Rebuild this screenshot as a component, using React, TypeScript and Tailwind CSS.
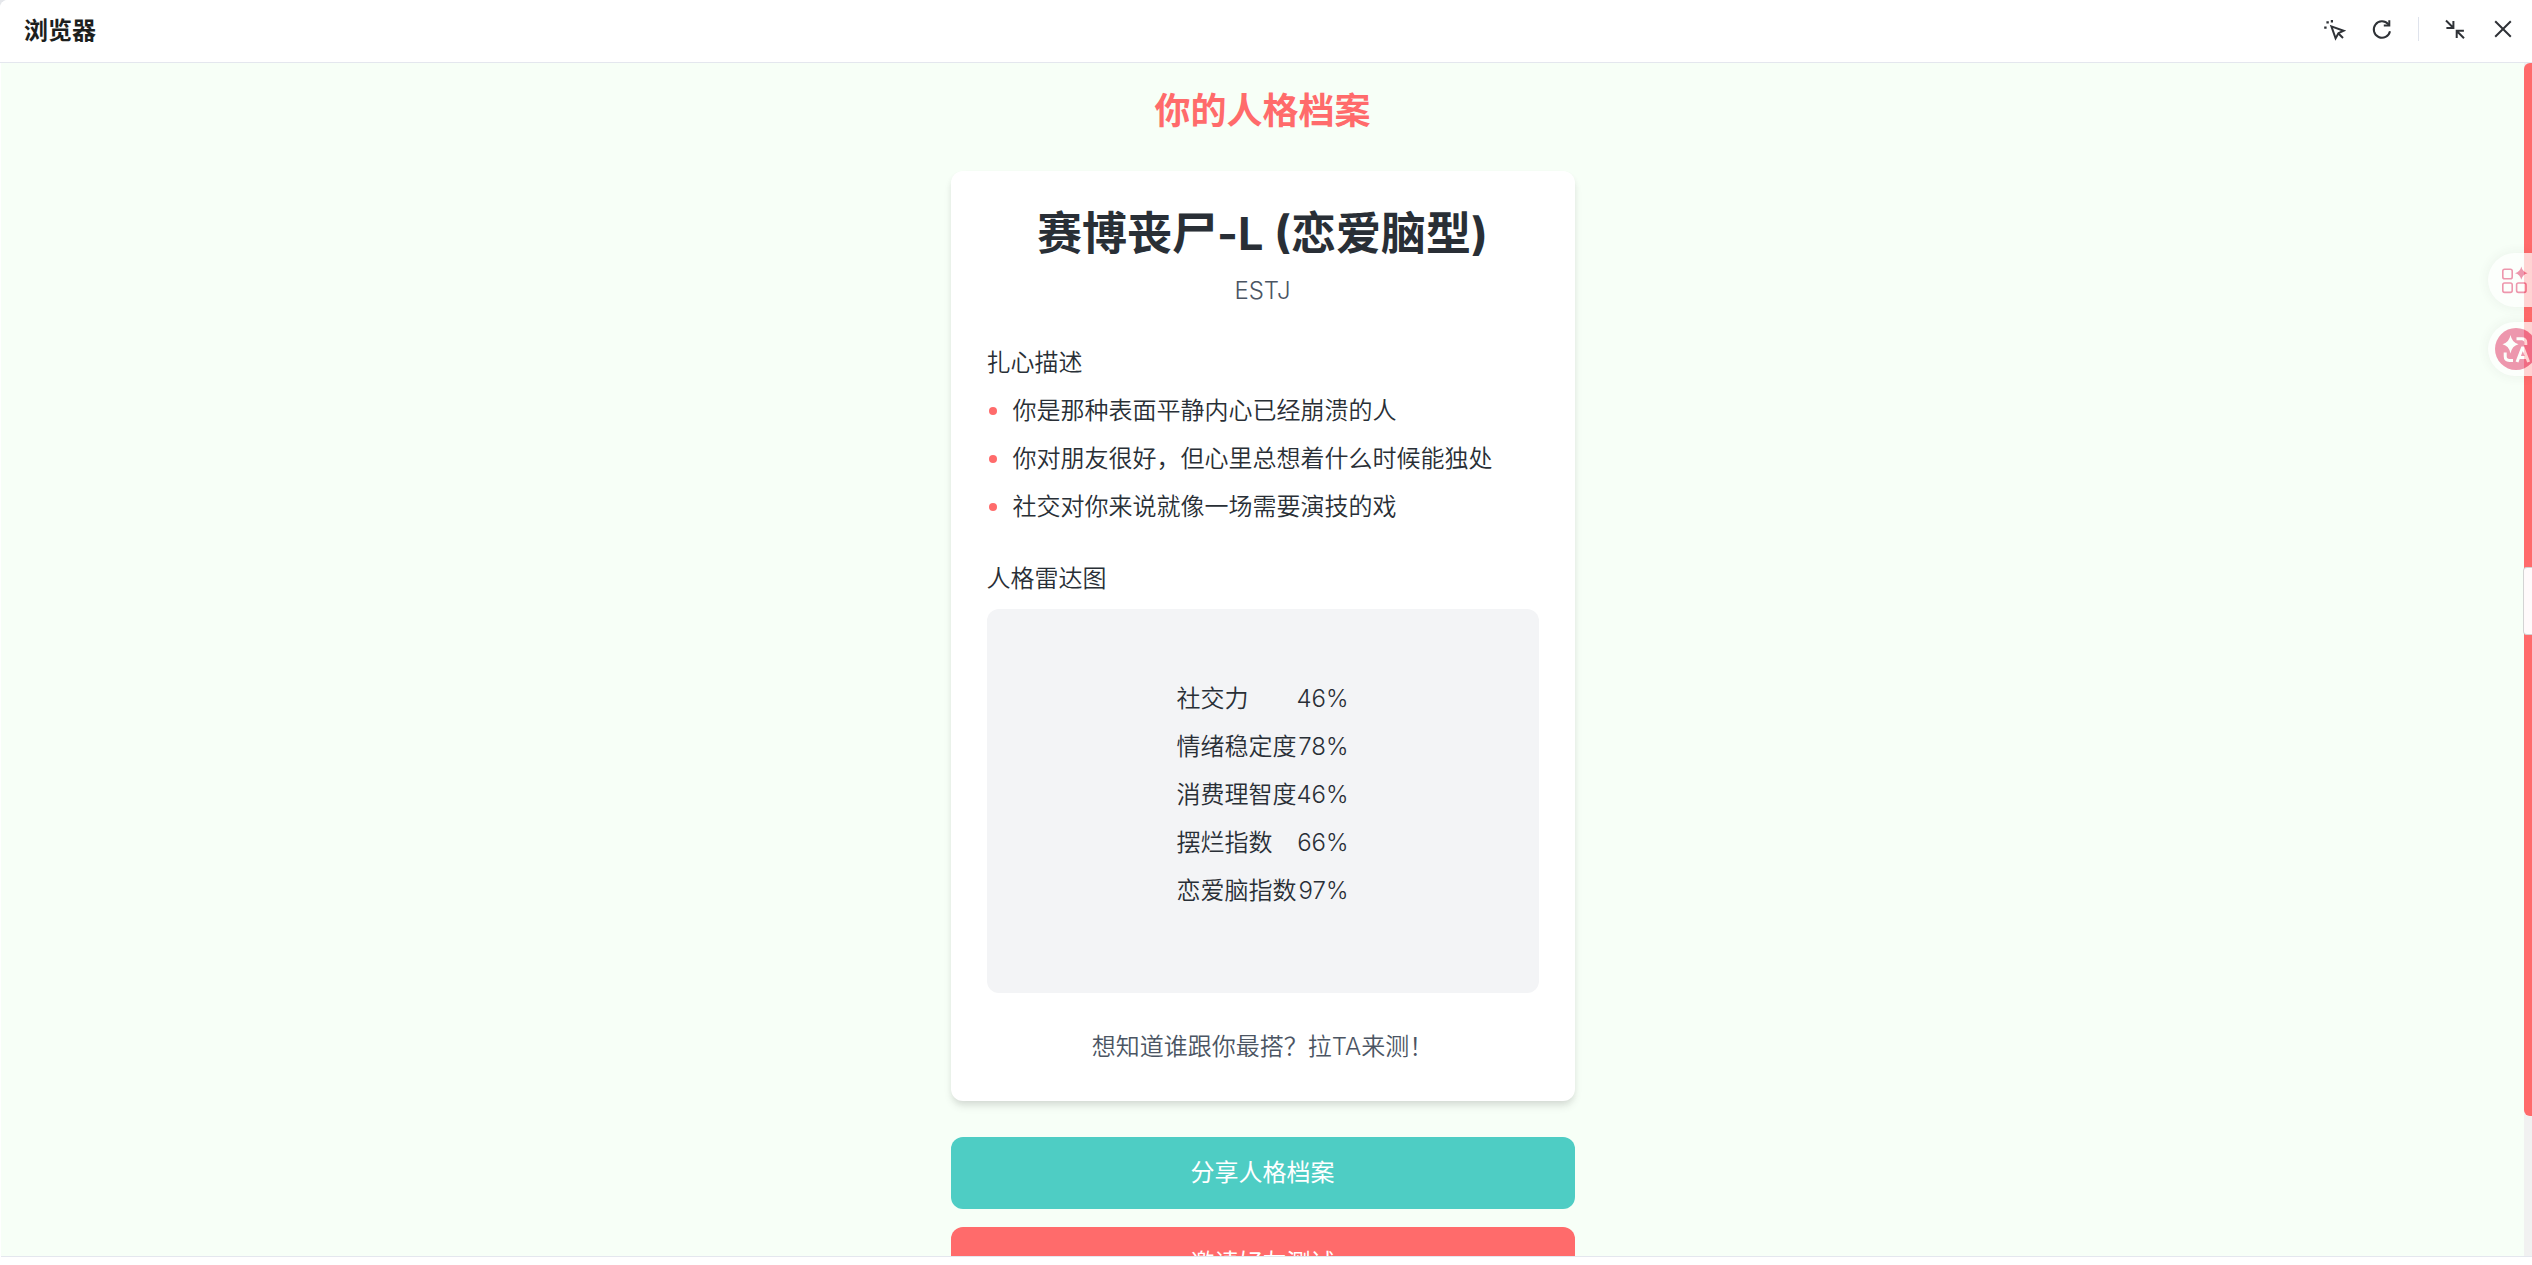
import type { ReactNode } from "react";

const descriptions = [
  "你是那种表面平静内心已经崩溃的人",
  "你对朋友很好，但心里总想着什么时候能独处",
  "社交对你来说就像一场需要演技的戏",
];

const stats = [
  { label: "社交力", value: 46 },
  { label: "情绪稳定度", value: 78 },
  { label: "消费理智度", value: 46 },
  { label: "摆烂指数", value: 66 },
  { label: "恋爱脑指数", value: 97 },
];

function IconButton({ label, children }: { label: string; children: ReactNode }) {
  return (
    <button type="button" aria-label={label} className="flex h-6 w-6 items-center justify-center text-[#2f3237]">
      {children}
    </button>
  );
}

function Toolbar() {
  return (
    <header className="flex h-[63px] shrink-0 items-center justify-between border-b border-[#e4e7ee] bg-white pl-6 pr-[17px]">
      <h1 className="text-2xl font-bold text-[#1d1f1e]">浏览器</h1>
      <div className="flex items-center gap-6 pb-1">
        <IconButton label="选择元素">
          <svg width="24" height="24" viewBox="0 0 24 24" fill="none" stroke="currentColor" strokeWidth="2">
            <path d="M9.4 9.4 21.6 13.7 16.4 16.2 13.6 21.4Z" />
            <path d="m16.2 16.2 4.8 4.8" />
            <path d="M2.2 10.6h2.4M4.4 5.4h2.4M9.9 3v2.4" strokeWidth="2.2" />
          </svg>
        </IconButton>
        <IconButton label="刷新">
          <svg width="24" height="24" viewBox="0 0 24 24" fill="none" stroke="currentColor" strokeWidth="2">
            <path d="M20 14.3A8.2 8.2 0 1 1 18.2 7.2L19.2 8.4" />
            <path d="M19.3 3.2v5.4h-5.5" />
          </svg>
        </IconButton>
        <span className="h-6 w-px bg-[#dfe3ec]" />
        <IconButton label="缩小">
          <svg width="24" height="24" viewBox="0 0 24 24" fill="none" stroke="currentColor" strokeWidth="2">
            <path d="m3 3.5 7 7M10.4 4v7H3.4" />
            <path d="m21 21.2-7-7M13.7 21v-7.2h7.2" />
          </svg>
        </IconButton>
        <IconButton label="关闭">
          <svg width="24" height="24" viewBox="0 0 24 24" fill="none" stroke="currentColor" strokeWidth="2">
            <path d="m4.2 4.2 15.6 15.6M19.8 4.2 4.2 19.8" />
          </svg>
        </IconButton>
      </div>
    </header>
  );
}

function ProfileCard() {
  return (
    <section className="mb-9 rounded-xl bg-white p-9 shadow-[0_6px_9px_-1px_rgba(0,0,0,0.1),0_3px_6px_-1px_rgba(0,0,0,0.06)]">
      <div className="mb-9 text-center">
        <h3 className="mb-3 text-[45px] leading-[54px] font-bold">赛博丧尸-L (恋爱脑型)</h3>
        <p className="font-light text-[#4b5563]">ESTJ</p>
      </div>

      <div className="mb-9">
        <h4 className="mb-3 font-[350]">扎心描述</h4>
        <ul className="flex flex-col gap-3">
          {descriptions.map((text) => (
            <li key={text} className="flex items-center">
              <span className="mr-4 ml-0.5 h-2 w-2 shrink-0 rounded-full bg-[#ff6b6b]" />
              {text}
            </li>
          ))}
        </ul>
      </div>

      <div className="mb-9">
        <h4 className="mb-3 font-[350]">人格雷达图</h4>
        <div className="flex h-96 items-center justify-center rounded-xl bg-[#f3f4f6]">
          <dl>
            {stats.map(({ label, value }) => (
              <div key={label} className="mb-3 flex justify-between">
                <dt>{label}</dt>
                <dd className="font-light">{value}%</dd>
              </div>
            ))}
          </dl>
        </div>
      </div>

      <p className="text-center text-[#4b5563]">想知道谁跟你最搭？拉TA来测！</p>
    </section>
  );
}

// Assistant buttons docked to the right edge of the window
function FloatingTools() {
  return (
    <div className="absolute top-[253px] right-0 flex flex-col gap-[15px] opacity-70">
      <button
        type="button"
        aria-label="工具箱"
        className="flex h-[54px] w-11 items-center rounded-l-full bg-white pl-3 shadow-[0_0_12px_rgba(0,0,0,0.08)]"
      >
        <svg width="28" height="28" viewBox="0 0 28 28" className="shrink-0" fill="none" stroke="#ea6c8e" strokeWidth="1.6">
          <rect x="2.8" y="3.3" width="9.4" height="9.4" rx="1.8" />
          <rect x="2.8" y="17" width="9.4" height="9.4" rx="1.8" />
          <rect x="16.6" y="17" width="9.4" height="9.4" rx="1.8" />
          <path d="M21.3.6Q22.4 6 27.6 7.2 22.4 8.4 21.3 13.8 20.2 8.4 15 7.2 20.2 6 21.3.6Z" fill="#ea6c8e" stroke="none" />
        </svg>
      </button>
      <button
        type="button"
        aria-label="翻译"
        className="flex h-[54px] w-11 items-center overflow-hidden rounded-l-full bg-white pl-[7px] shadow-[0_0_12px_rgba(0,0,0,0.08)]"
      >
        <svg width="42" height="42" viewBox="0 0 42 42" className="shrink-0" fill="none" stroke="#fff">
          <circle cx="21" cy="21" r="21" fill="#ea6c8e" stroke="none" />
          <path d="M15.5 7Q17 14.7 23.5 16.2 17 17.7 15.5 25.4 14 17.7 7.5 16.2 14 14.7 15.5 7Z" fill="#fff" stroke="none" />
          <path d="M21.5 10.8h5.3q4 0 4 4v2.2" strokeWidth="3" />
          <path d="M10.2 24.5v3.8q0 4.2 4.2 4.2h3.6" strokeWidth="3" />
          <path d="M22 34l5.4-14h.8l5.4 14M23.8 29.5h8" strokeWidth="3" />
        </svg>
      </button>
    </div>
  );
}

export default function App() {
  return (
    <div className="bg-[#e5e7eb] font-[Inter,'Noto_Sans_CJK_SC',sans-serif]">
      <div className="relative flex h-screen flex-col overflow-hidden rounded-tl-lg bg-white pb-2 text-2xl leading-9 font-[350] text-[#292f36]">
        <Toolbar />
        <div className="ml-px flex min-h-0 flex-1 border-b border-[#e4e7ee]">
          <main className="flex-1 overflow-hidden bg-[#f7fff7]">
            <div className="mx-auto max-w-[672px] p-6">
              <h2 className="mb-9 text-center text-4xl leading-[48px] font-bold text-[#ff6b6b]">你的人格档案</h2>
              <ProfileCard />
              <div className="flex flex-col gap-[18px]">
                <button type="button" className="rounded-xl bg-[#4ecdc4] py-[18px] font-normal text-white">
                  分享人格档案
                </button>
                <button type="button" className="rounded-xl bg-[#ff6b6b] py-[18px] font-normal text-white">
                  邀请好友测试
                </button>
              </div>
            </div>
          </main>
          <div className="w-2 bg-[#f1f1f1]">
            <div className="h-[88.3%] rounded-l-md bg-[#ff6b6b]" />
          </div>
        </div>

        <FloatingTools />
        <div className="absolute top-[567px] right-0 h-[68px] w-[9px] rounded-l border border-r-0 border-[#d4d4d4] bg-[#fffafb]" />
      </div>
    </div>
  );
}
